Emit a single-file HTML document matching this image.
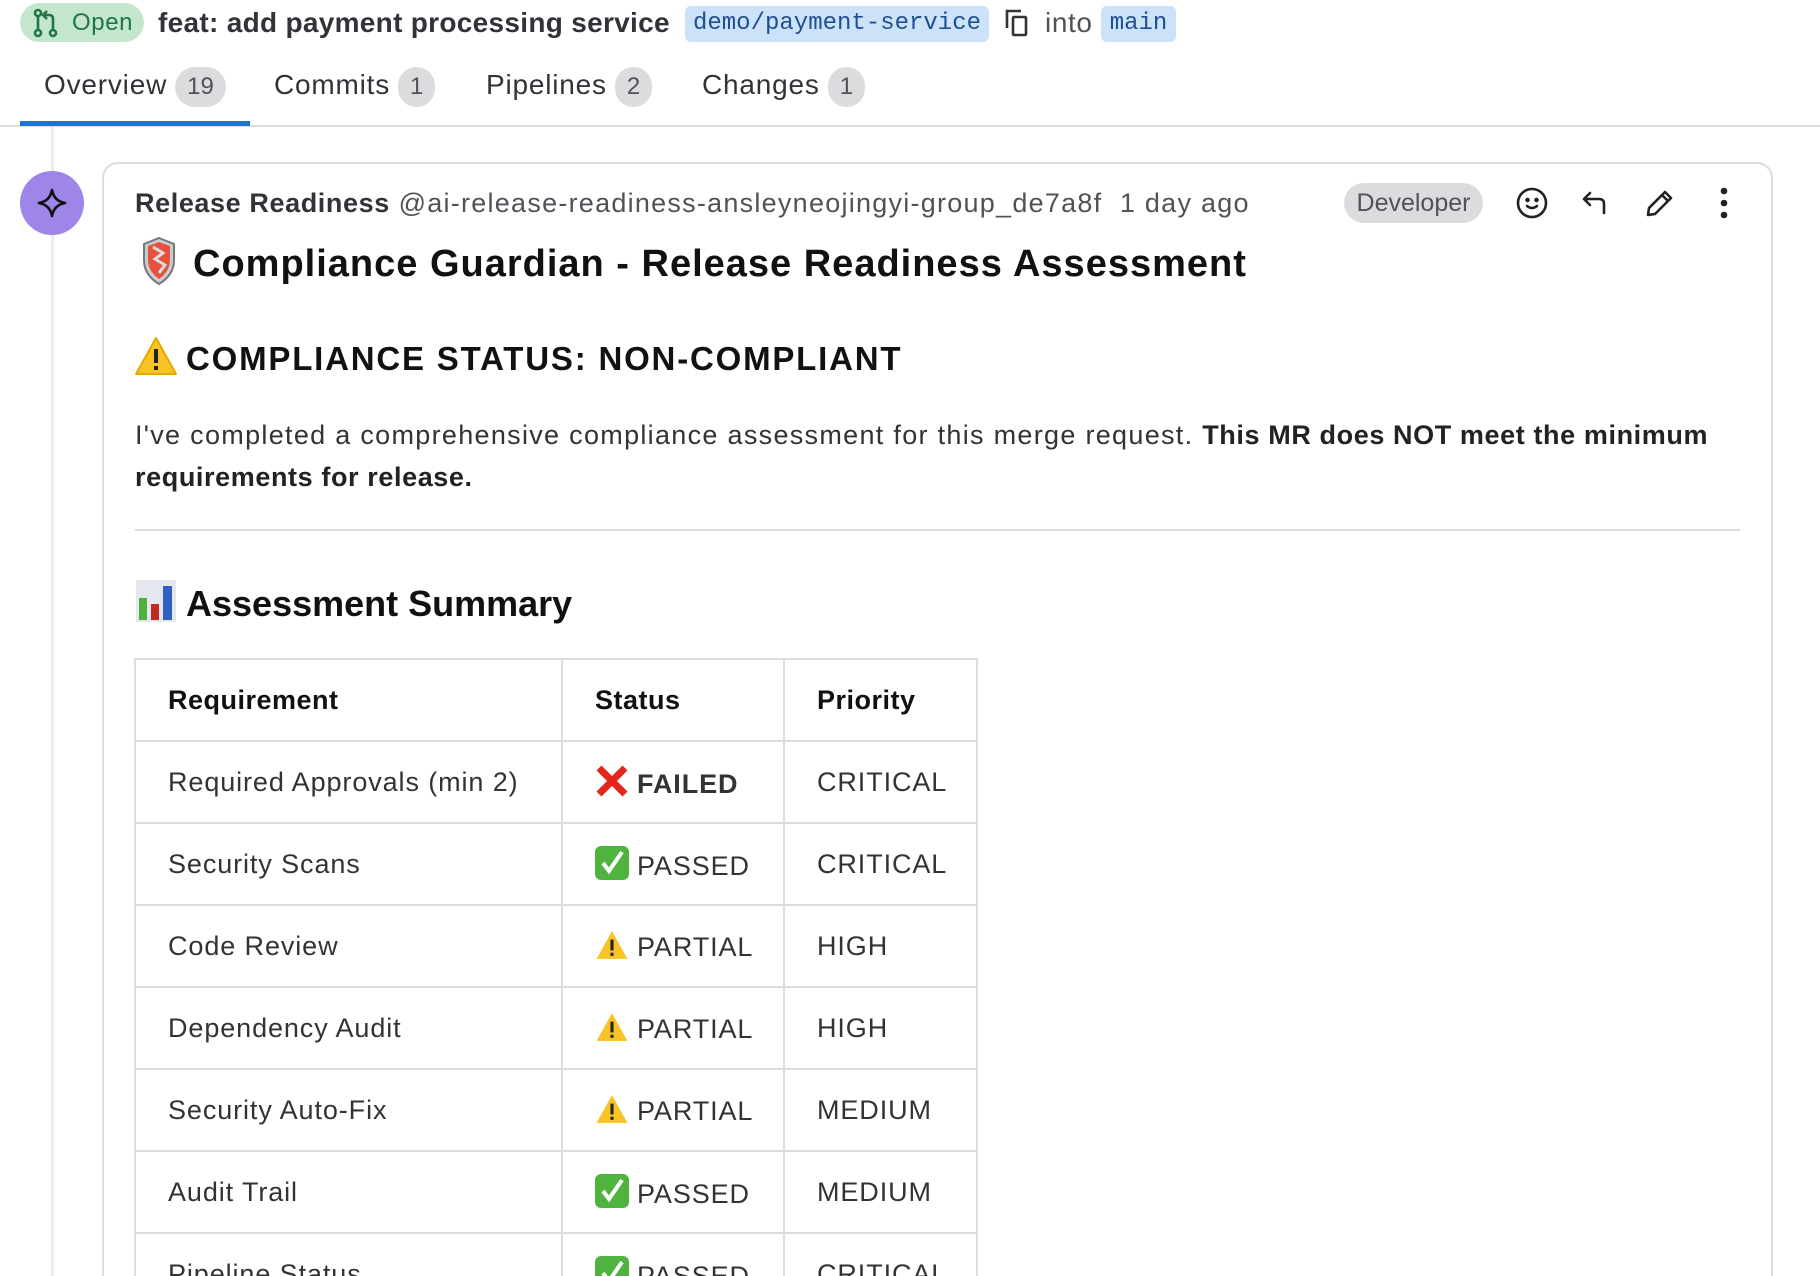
<!DOCTYPE html>
<html><head><meta charset="utf-8"><style>
*{margin:0;padding:0;box-sizing:border-box}
html,body{width:1820px;height:1276px;overflow:hidden}
body{background:#fff;font-family:"Liberation Sans",sans-serif;color:#1f1e24}
#w{position:relative;width:1820px;height:1276px;overflow:hidden}
.a{position:absolute;white-space:nowrap}
.cnt{display:inline-block;background:#dcdcde;color:#535158;border-radius:20px;height:40px;line-height:40px;text-align:center;font-size:24px;vertical-align:middle;margin-left:8px;padding:0 12px;letter-spacing:0}
.tab{font-size:28px;color:#333238;top:64px;line-height:42px;letter-spacing:0.8px}
table{border-collapse:collapse;table-layout:fixed;width:842px;position:absolute;left:134px;top:658px;font-size:27px;color:#333;letter-spacing:0.9px}
td,th{border:2px solid #dcdcde;height:82px;padding:0 0 0 32px;text-align:left;white-space:nowrap;overflow:hidden}
th{font-weight:bold;color:#111;letter-spacing:0.5px}
.ic{display:inline-block;vertical-align:-5px;margin-right:8px}
</style></head><body><div id="w">
<div class="a" style="left:20px;top:3px;width:124px;height:39px;background:#c3e6cd;border-radius:20px;color:#217645;font-size:24px;line-height:39px;padding-left:52px;letter-spacing:0.6px">Open</div>
<svg class="a" style="left:32px;top:8px" width="28" height="30" viewBox="0 0 28 30" fill="none" stroke="#217645" stroke-width="2.6"><circle cx="6" cy="5" r="3"/><circle cx="6" cy="25" r="3"/><circle cx="21" cy="25" r="3"/><path d="M6 8v14M21 22V11q0-4-4-4h-5m3-4l-4 4 4 4"/></svg>
<div class="a" style="left:158px;top:4px;font-size:28px;font-weight:bold;color:#333238;line-height:38px;letter-spacing:0.3px">feat: add payment processing service</div>
<div class="a" style="left:685px;top:6px;width:304px;height:36px;background:#cbe2f9;border-radius:6px;color:#1f4f91;font-family:'Liberation Mono',monospace;font-size:24px;line-height:36px;text-align:center">demo/payment-service</div>
<svg class="a" style="left:1003px;top:8px" width="28" height="30" viewBox="0 0 28 30" fill="none" stroke="#333" stroke-width="2.6"><path d="M4 20V3h14"/><rect x="10" y="9" width="13" height="18" rx="1"/></svg>
<div class="a" style="left:1045px;top:4px;font-size:28px;color:#535158;line-height:38px;letter-spacing:0.6px">into</div>
<div class="a" style="left:1101px;top:6px;width:75px;height:36px;background:#cbe2f9;border-radius:6px;color:#1f4f91;font-family:'Liberation Mono',monospace;font-size:24px;line-height:36px;text-align:center">main</div>
<div class="a tab" style="left:44px">Overview<span class="cnt">19</span></div>
<div class="a tab" style="left:274px">Commits<span class="cnt">1</span></div>
<div class="a tab" style="left:486px">Pipelines<span class="cnt">2</span></div>
<div class="a tab" style="left:702px">Changes<span class="cnt">1</span></div>
<div class="a" style="left:0;top:125px;width:1820px;height:2px;background:#dcdcde"></div>
<div class="a" style="left:20px;top:121px;width:230px;height:5px;background:#1f75cb"></div>
<div class="a" style="left:51px;top:127px;width:3px;height:1149px;background:#ececef"></div>
<div class="a" style="left:20px;top:171px;width:64px;height:64px;border-radius:50%;background:#9e86e9"></div>
<svg class="a" style="left:36px;top:187px" width="32" height="32" viewBox="0 0 32 32"><path d="M16 3Q18 14 29 16Q18 18 16 29Q14 18 3 16Q14 14 16 3Z" fill="none" stroke="#111" stroke-width="2.6" stroke-linejoin="round"/></svg>
<div class="a" style="left:102px;top:162px;width:1671px;height:1140px;border:2px solid #dcdcde;border-radius:16px"></div>
<div class="a" style="left:135px;top:185px;font-size:27px;line-height:36px;color:#535158;letter-spacing:1.25px"><b style="color:#333238;letter-spacing:0.6px">Release Readiness</b> @ai-release-readiness-ansleyneojingyi-group_de7a8f&nbsp; 1 day ago</div>
<div class="a" style="left:1344px;top:183px;width:139px;height:40px;background:#dcdcde;border-radius:20px;color:#535158;font-size:25px;line-height:40px;text-align:center">Developer</div>
<svg class="a" style="left:1514px;top:185px" width="36" height="36" viewBox="0 0 36 36" fill="none" stroke="#222" stroke-width="2.6" stroke-linecap="round"><circle cx="18" cy="18" r="14"/><circle cx="13.5" cy="15" r="1" fill="#222"/><circle cx="22.5" cy="15" r="1" fill="#222"/><path d="M13 21q5 4 10 0"/></svg>
<svg class="a" style="left:1580px;top:187px" width="32" height="32" viewBox="0 0 32 32" fill="none" stroke="#222" stroke-width="2.6" stroke-linecap="round" stroke-linejoin="round"><path d="M10 6L4 12l6 6M4 12h15q5 0 5 5v9"/></svg>
<svg class="a" style="left:1644px;top:187px" width="32" height="32" viewBox="0 0 32 32" fill="none" stroke="#222" stroke-width="2.6" stroke-linejoin="round"><path d="M4 28l1-7L21 5l6 6L11 27z M18 8l6 6"/></svg>
<svg class="a" style="left:1716px;top:186px" width="16" height="34" viewBox="0 0 16 34" fill="#222"><circle cx="8" cy="5" r="3.3"/><circle cx="8" cy="17" r="3.3"/><circle cx="8" cy="29" r="3.3"/></svg>
<svg class="a" style="left:140px;top:235px" width="38" height="52" viewBox="0 0 38 52"><path d="M19 3L34 9v16q0 15-15 24Q4 40 4 25V9z" fill="#c9cdd2" stroke="#777" stroke-width="2"/><path d="M19 7L30 11v14q0 11-11 19Q8 36 8 25V11z" fill="#e8513b"/><path d="M13 12l10 6-8 6 10 6-6 8" fill="none" stroke="#ddd" stroke-width="3"/></svg>
<div class="a" style="left:193px;top:240px;font-size:38px;font-weight:bold;line-height:48px;color:#111;letter-spacing:1px">Compliance Guardian - Release Readiness Assessment</div>
<svg class="a" style="left:134px;top:336px" width="44" height="40" viewBox="0 0 44 40"><path d="M22 2L42 38H2z" fill="#f7c325" stroke="#e6a800" stroke-width="2" stroke-linejoin="round"/><rect x="20" y="13" width="4" height="14" fill="#222"/><rect x="20" y="30" width="4" height="4" fill="#222"/></svg>
<div class="a" style="left:186px;top:338px;font-size:33px;font-weight:bold;line-height:42px;color:#111;letter-spacing:1.8px">COMPLIANCE STATUS: NON-COMPLIANT</div>
<div class="a" style="left:135px;top:414px;font-size:27px;line-height:42px;color:#333;white-space:normal;width:1620px;letter-spacing:1.3px">I've completed a comprehensive compliance assessment for this merge request. <b style="color:#222;letter-spacing:0.6px">This MR does NOT meet the minimum requirements for release.</b></div>
<div class="a" style="left:135px;top:529px;width:1605px;height:2px;background:#dcdcde"></div>
<svg class="a" style="left:136px;top:580px" width="40" height="42" viewBox="0 0 40 42"><rect x="0" y="0" width="40" height="42" fill="#e4e8ee"/><rect x="3" y="18" width="8" height="22" fill="#4db13b"/><rect x="15" y="24" width="8" height="16" fill="#c32a1f"/><rect x="27" y="6" width="9" height="34" fill="#2f62c0"/></svg>
<div class="a" style="left:186px;top:582px;font-size:36px;font-weight:bold;line-height:44px;color:#111">Assessment Summary</div>
<table>
<colgroup><col style="width:427px"><col style="width:222px"><col style="width:193px"></colgroup>
<tr><th>Requirement</th><th>Status</th><th>Priority</th></tr>
<tr><td>Required Approvals (min 2)</td><td><svg class="ic" width="34" height="34" viewBox="0 0 34 34"><path d="M4 4L30 30M30 4L4 30" stroke="#e2261c" stroke-width="7"/></svg><b>FAILED</b></td><td>CRITICAL</td></tr>
<tr><td>Security Scans</td><td><svg class="ic" width="34" height="34" viewBox="0 0 34 34"><rect width="34" height="34" rx="6" fill="#4fb43e"/><path d="M8 17l6 8L27 6" fill="none" stroke="#fff" stroke-width="4"/></svg>PASSED</td><td>CRITICAL</td></tr>
<tr><td>Code Review</td><td><svg class="ic" width="34" height="32" viewBox="0 0 44 40"><path d="M22 2L42 38H2z" fill="#f7c325"/><rect x="20" y="13" width="4" height="14" fill="#222"/><rect x="20" y="30" width="4" height="4" fill="#222"/></svg>PARTIAL</td><td>HIGH</td></tr>
<tr><td>Dependency Audit</td><td><svg class="ic" width="34" height="32" viewBox="0 0 44 40"><path d="M22 2L42 38H2z" fill="#f7c325"/><rect x="20" y="13" width="4" height="14" fill="#222"/><rect x="20" y="30" width="4" height="4" fill="#222"/></svg>PARTIAL</td><td>HIGH</td></tr>
<tr><td>Security Auto-Fix</td><td><svg class="ic" width="34" height="32" viewBox="0 0 44 40"><path d="M22 2L42 38H2z" fill="#f7c325"/><rect x="20" y="13" width="4" height="14" fill="#222"/><rect x="20" y="30" width="4" height="4" fill="#222"/></svg>PARTIAL</td><td>MEDIUM</td></tr>
<tr><td>Audit Trail</td><td><svg class="ic" width="34" height="34" viewBox="0 0 34 34"><rect width="34" height="34" rx="6" fill="#4fb43e"/><path d="M8 17l6 8L27 6" fill="none" stroke="#fff" stroke-width="4"/></svg>PASSED</td><td>MEDIUM</td></tr>
<tr><td>Pipeline Status</td><td><svg class="ic" width="34" height="34" viewBox="0 0 34 34"><rect width="34" height="34" rx="6" fill="#4fb43e"/><path d="M8 17l6 8L27 6" fill="none" stroke="#fff" stroke-width="4"/></svg>PASSED</td><td>CRITICAL</td></tr>
</table>
</div></body></html>
